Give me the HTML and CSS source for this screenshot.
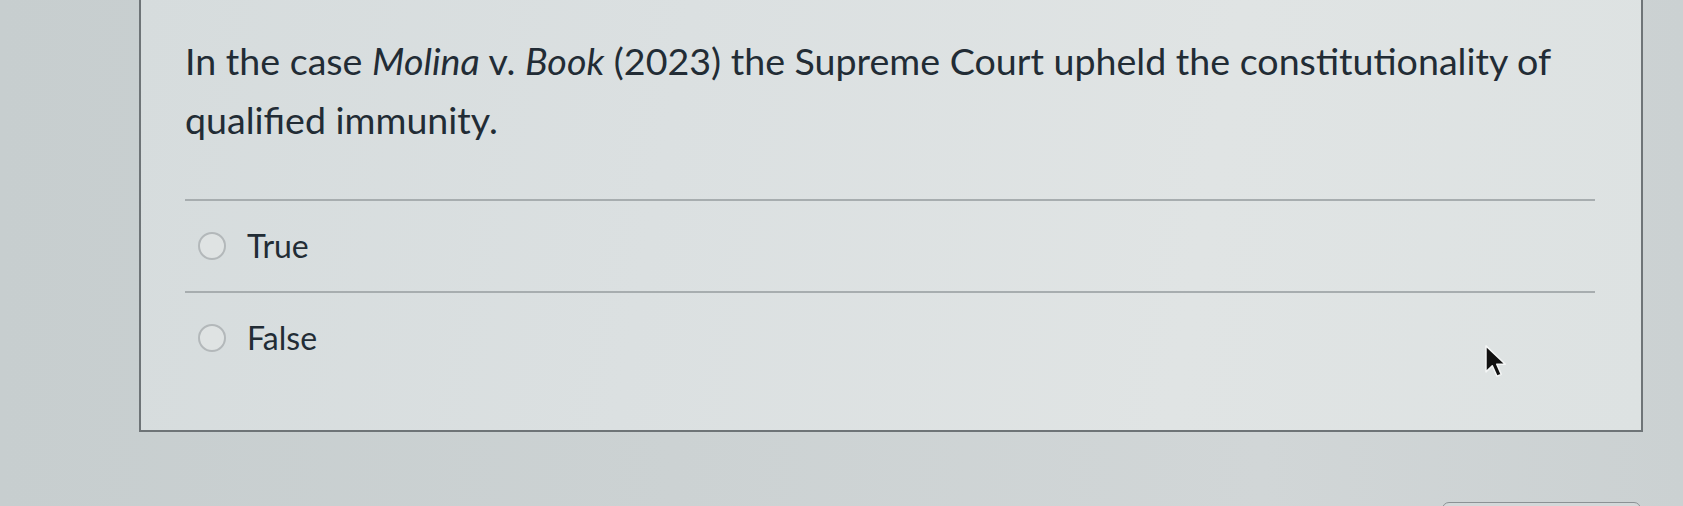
FILE: index.html
```html
<!DOCTYPE html>
<html lang="en">
<head>
<meta charset="utf-8">
<title>Question</title>
<link rel="stylesheet" href="styles.css">
</head>
<body>
<div class="page">
  <div class="question-card">
    <div class="question-text">In the case <em>Molina</em> v. <em>Book</em> (2023) the Supreme Court upheld the constitutionality of qualified immunity.</div>
    <div class="answers">
      <label class="answer">
        <span class="radio"></span>
        <span class="answer-label">True</span>
      </label>
      <label class="answer">
        <span class="radio"></span>
        <span class="answer-label">False</span>
      </label>
    </div>
  </div>
  <div class="footer">
    <button class="footer-button" type="button"></button>
  </div>
  <svg class="cursor" width="28" height="38" viewBox="0 0 22 30" aria-hidden="true">
    <path d="M1.5 1.5 L1.5 22 L6.5 17.2 L10.2 25.5 L13.6 24 L10 16 L16.8 16 Z" fill="#111" stroke="#f4f6f6" stroke-width="1.2" stroke-linejoin="round"/>
  </svg>
</div>
</body>
</html>
```

FILE: styles.css
```css
html, body {
  margin: 0;
  padding: 0;
}

body {
  width: 1683px;
  height: 506px;
  overflow: hidden;
  font-family: Lato, "Open Sans", Arial, sans-serif;
  color: #222c35;
  background: linear-gradient(90deg, #c7cecf 0%, #ccd2d3 40%, #d1d6d7 75%, #cbd1d2 100%);
}

.page {
  position: relative;
  height: 506px;
  overflow: hidden;
  padding: 0 40px 0 139px;
  box-sizing: border-box;
}

/* question box: top edge scrolled out of view */
.question-card {
  height: 432px;
  box-sizing: border-box;
  border: 2px solid #6e7477;
  border-top: none;
  padding: 31px 46px 0 44px;
  background: linear-gradient(100deg, #d6dcdd 0%, #dbe0e1 35%, #e0e4e4 70%, #dde2e2 100%);
}

.question-text {
  font-size: 37.6px;
  line-height: 59px;
}

.question-text em {
  font-style: italic;
}

.answers {
  margin-top: 50px;
}

.answer {
  display: flex;
  align-items: center;
  height: 92px;
  box-sizing: border-box;
  border-top: 2px solid #a7adaf;
  padding-left: 13px;
}

.radio {
  width: 28px;
  height: 28px;
  box-sizing: border-box;
  border-radius: 50%;
  border: 2px solid #b3b8ba;
  background: #dfe3e3;
  flex: none;
}

.answer-label {
  margin-left: 21px;
  font-size: 32px;
  line-height: 1.2;
  position: relative;
  top: 0;
}

.footer {
  display: flex;
  justify-content: flex-end;
  margin-top: 70px;
  padding-right: 2px;
}

.footer-button {
  width: 199px;
  height: 20px;
  border: 1.5px solid #8b9194;
  border-radius: 7px;
  background: #d3d8d9;
  padding: 0;
}

.cursor {
  position: absolute;
  left: 1484px;
  top: 344px;
}
```
